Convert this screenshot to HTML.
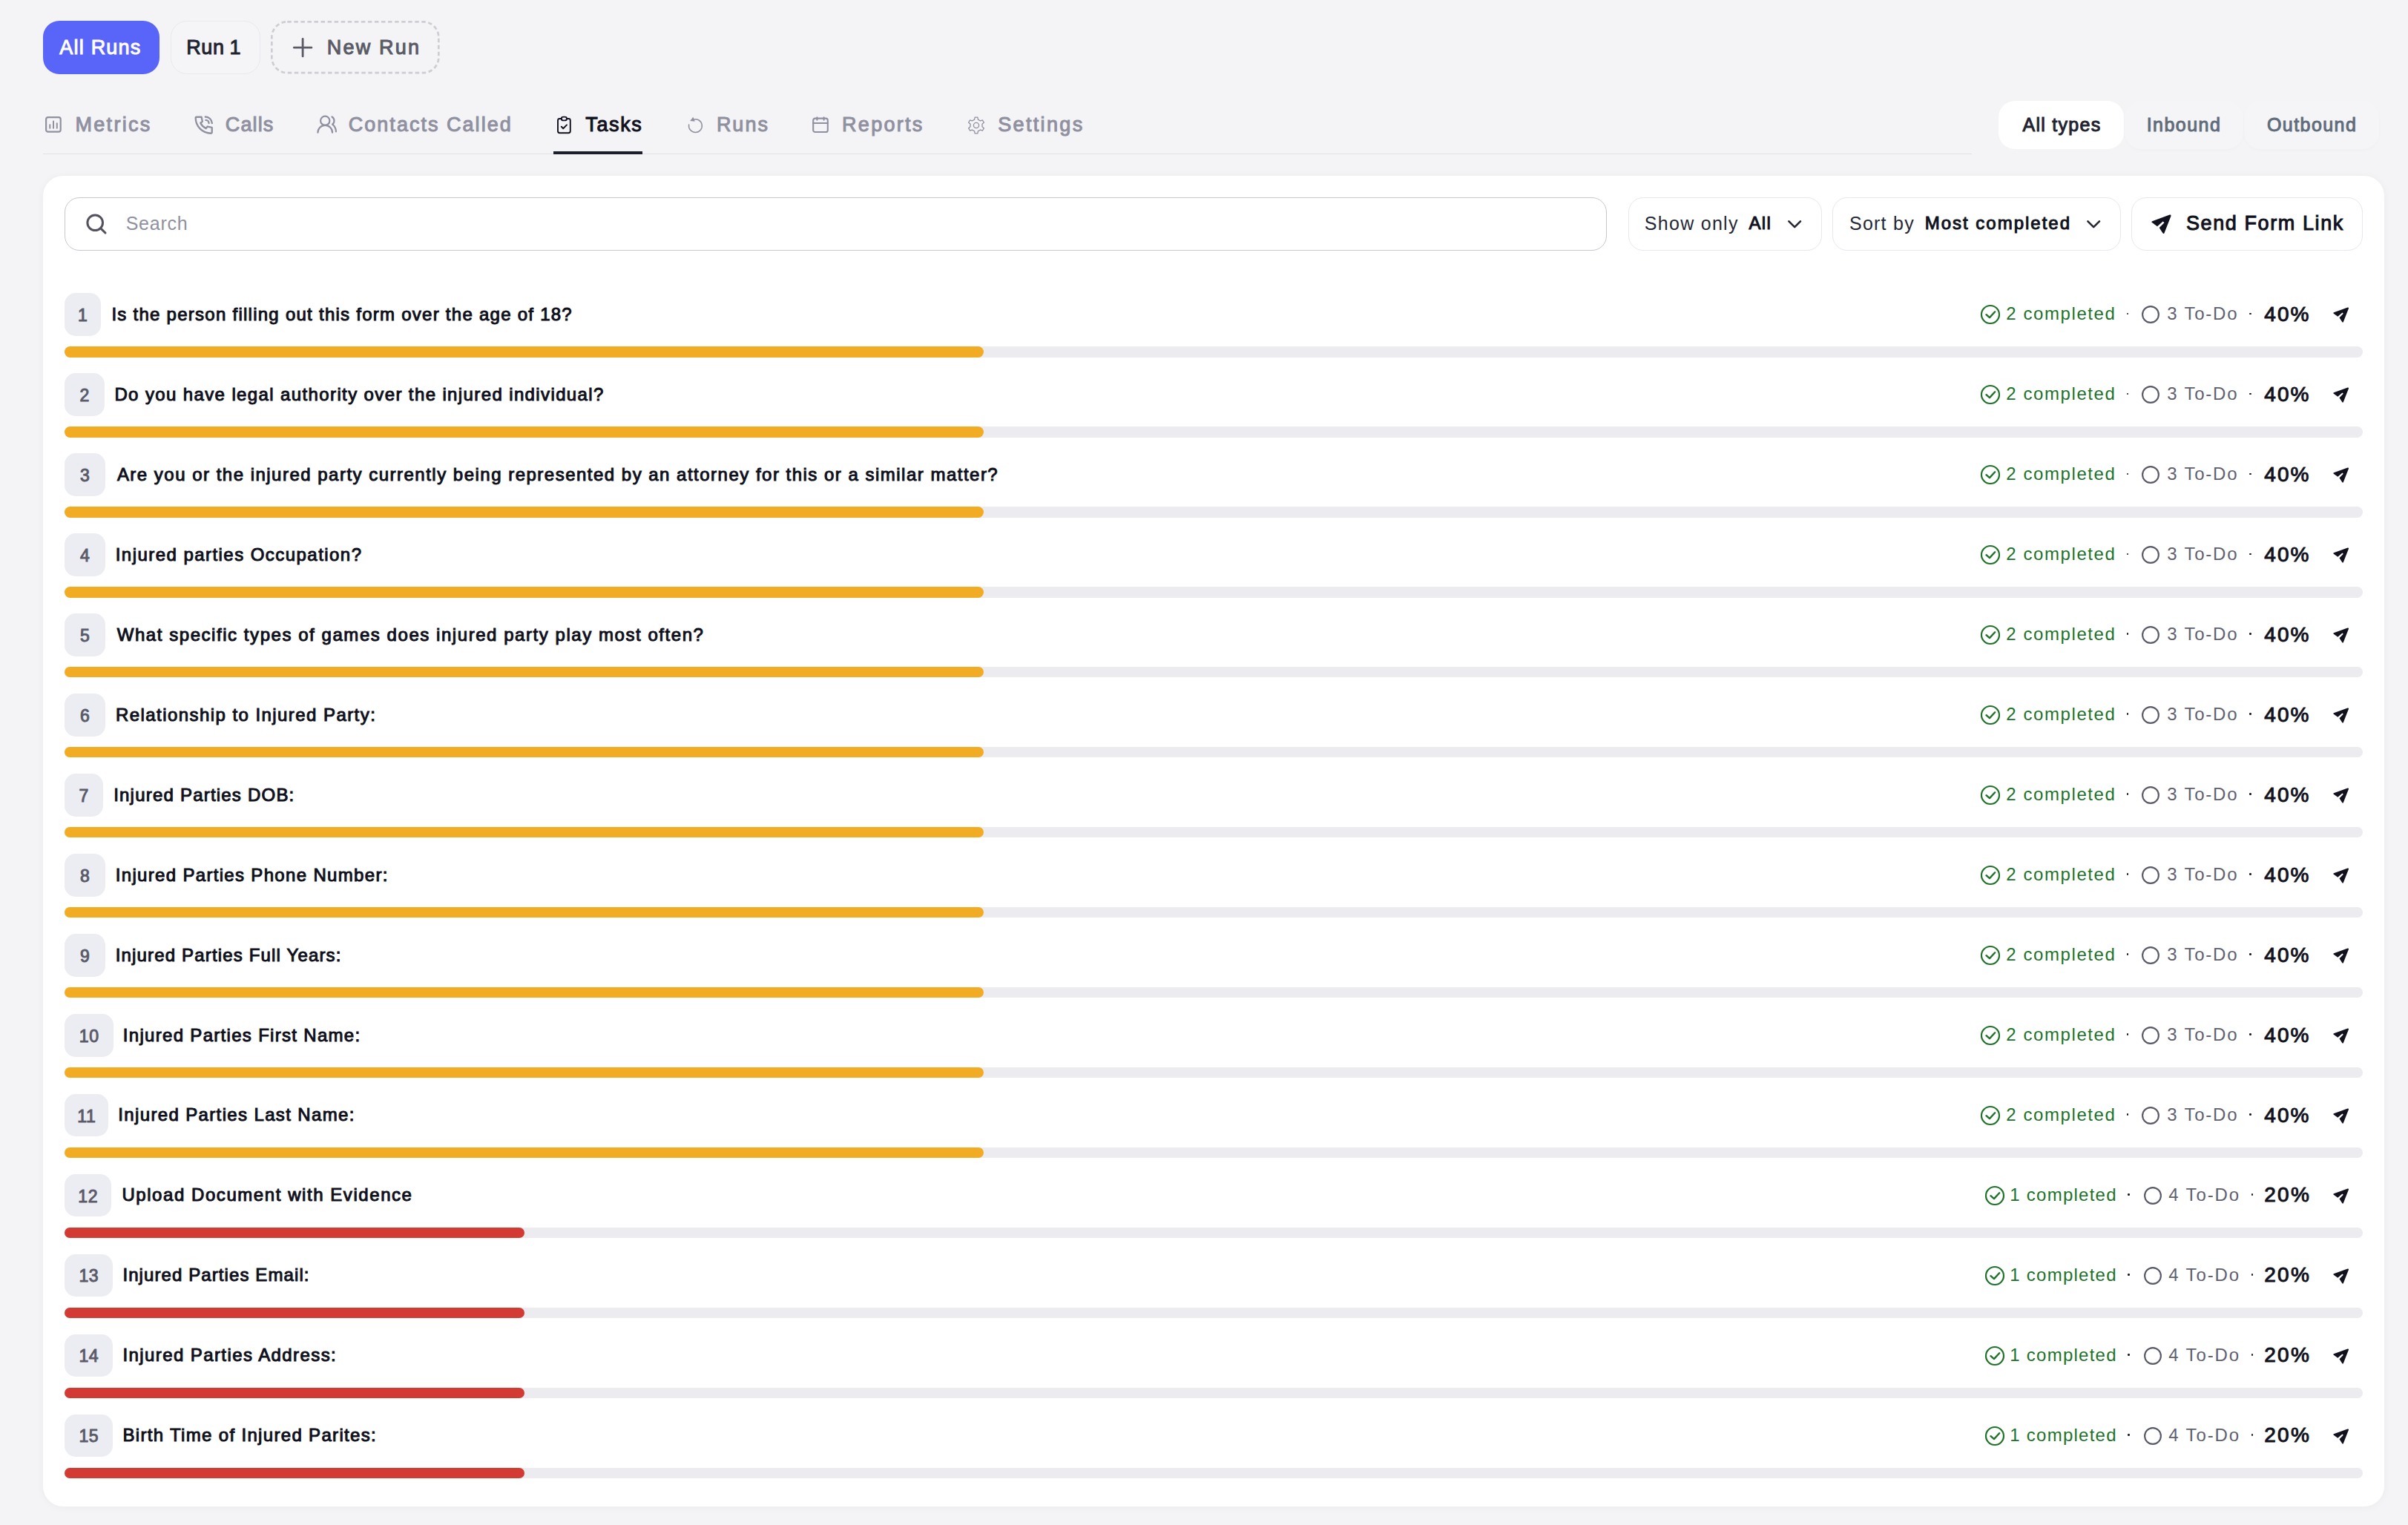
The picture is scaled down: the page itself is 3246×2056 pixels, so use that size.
<!DOCTYPE html>
<html lang="en"><head><meta charset="utf-8"><title>Tasks</title>
<style>
html,body{margin:0;padding:0;}
body{width:3246px;height:2056px;background:#f4f4f7;position:relative;overflow:hidden;font-family:"Liberation Sans", sans-serif;}
.t{position:absolute;white-space:pre;line-height:1;font-family:"Liberation Sans", sans-serif;}
.b{position:absolute;display:block;}
</style></head><body>
<div class="b" style="left:58px;top:28px;width:157px;height:71.5px;background:#5964f9;border-radius:22px;"></div>
<div class="t" style="left:80.34px;top:51.24px;font-size:27px;font-weight:400;color:#ffffff;letter-spacing:1.206px;-webkit-text-stroke:1.0px #ffffff;">All Runs</div>
<div class="b" style="left:229.5px;top:28px;width:121px;height:71.5px;border:1.5px solid #e9e9ee;border-radius:22px;box-sizing:border-box;background:#f5f5f8;"></div>
<div class="t" style="left:251.28px;top:51.24px;font-size:27px;font-weight:400;color:#1f2430;letter-spacing:0.577px;-webkit-text-stroke:1.0px #1f2430;word-spacing:-1px;">Run 1</div>
<svg class="b" style="left:365.00px;top:28.00px;" width="228" height="72" viewBox="0 0 228 72" fill="none"><rect x="1.3" y="1.3" width="225" height="68.9" rx="21" stroke="#cdced3" stroke-width="2.7" stroke-dasharray="5.5 3.55"/></svg>
<svg class="b" style="left:395.00px;top:51.00px;" width="26.5" height="26.5" viewBox="0 0 26.5 26.5" fill="none"><path d="M13.1 1.5V24.9M1.3 13.2H24.9" stroke="#5a5b66" stroke-width="2.8" stroke-linecap="round"/></svg>
<div class="t" style="left:440.77px;top:51.24px;font-size:27px;font-weight:400;color:#5a5b66;letter-spacing:2.184px;-webkit-text-stroke:1.0px #5a5b66;">New Run</div>
<div class="b" style="left:58px;top:207px;width:2600px;height:1px;background:#e0e0e6;"></div>
<svg class="b" style="left:60.40px;top:156.40px;" width="24" height="24" viewBox="0 0 24 24" fill="none"><rect x="2.1" y="2.1" width="19.6" height="19.6" rx="2.6" stroke="#8f90a0" stroke-width="2.2"/><path d="M7.3 12.2V16.8M12 7.6V16.8M16.8 10.2V16.8" stroke="#8f90a0" stroke-width="2" stroke-linecap="round"/></svg>
<div class="t" style="left:101.44px;top:155.34px;font-size:27px;font-weight:400;color:#8f90a0;letter-spacing:2.322px;-webkit-text-stroke:1.0px #8f90a0;">Metrics</div>
<svg class="b" style="left:258.50px;top:152.60px;" width="31.44" height="31.44" viewBox="0 0 24 24" fill="none"><g stroke="#8f90a0" stroke-width="1.8" stroke-linecap="round" stroke-linejoin="round"><path d="M4.6 3.6H9.6L10.6 8.3L8.6 9.7A11.9 11.9 0 0 0 14.3 15.4L15.7 13.4L20.4 14.4V19.4A1 1 0 0 1 19.4 20.4A15.8 15.8 0 0 1 3.6 4.6A1 1 0 0 1 4.6 3.6Z"/><path d="M14.1 6.8a3.1 3.1 0 0 1 3.1 3.1"/><path d="M13.6 3.4a7 7 0 0 1 6.9 6.6"/></g></svg>
<div class="t" style="left:303.76px;top:155.34px;font-size:27px;font-weight:400;color:#8f90a0;letter-spacing:1.138px;-webkit-text-stroke:1.0px #8f90a0;">Calls</div>
<svg class="b" style="left:425.75px;top:153.40px;" width="29.4" height="29.4" viewBox="0 0 24 24" fill="none"><g stroke="#8f90a0" stroke-width="1.8" stroke-linecap="round" stroke-linejoin="round"><path d="M18 21a8 8 0 0 0-16 0"/><circle cx="10" cy="8" r="5"/><path d="M22 20c0-3.37-2-6.5-4-8a5 5 0 0 0-.45-8.3"/></g></svg>
<div class="t" style="left:469.76px;top:155.34px;font-size:27px;font-weight:400;color:#8f90a0;letter-spacing:2.027px;-webkit-text-stroke:1.0px #8f90a0;">Contacts Called</div>
<svg class="b" style="left:745.90px;top:153.70px;" width="28.8" height="28.8" viewBox="0 0 24 24" fill="none"><g stroke="#11121d" stroke-width="1.6" stroke-linecap="round" stroke-linejoin="round"><path d="M9 5h-2a2 2 0 0 0 -2 2v12a2 2 0 0 0 2 2h10a2 2 0 0 0 2 -2v-12a2 2 0 0 0 -2 -2h-2"/><path d="M9 5a2 2 0 0 1 2 -2h2a2 2 0 0 1 2 2a2 2 0 0 1 -2 2h-2a2 2 0 0 1 -2 -2z"/><path d="M9 14l2 2l4 -4"/></g></svg>
<div class="t" style="left:789.23px;top:155.34px;font-size:27px;font-weight:400;color:#11121d;letter-spacing:1.657px;-webkit-text-stroke:1.0px #11121d;">Tasks</div>
<div class="b" style="left:746px;top:204px;width:120px;height:3.5px;background:#1c1f2b;"></div>
<svg class="b" style="left:925.00px;top:156.00px;" width="26" height="26" viewBox="0 0 26 26" fill="none"><path d="M9.07 5.35A8.9 8.9 0 1 1 3.64 12.05" stroke="#8f90a0" stroke-width="1.5" stroke-linecap="round"/><path d="M5.17 6.92L9.31 1.69L11.79 7.81Z" fill="#8f90a0"/></svg>
<div class="t" style="left:965.89px;top:155.34px;font-size:27px;font-weight:400;color:#8f90a0;letter-spacing:1.998px;-webkit-text-stroke:1.0px #8f90a0;">Runs</div>
<svg class="b" style="left:1093.80px;top:156.00px;" width="24" height="24" viewBox="0 0 24 24" fill="none"><g stroke="#8f90a0" stroke-width="2.1" stroke-linecap="round"><rect x="2.2" y="3.6" width="19.6" height="18.4" rx="2.6"/><path d="M2.2 10H21.8M7.4 2.4V5.8M16.6 2.4V5.8"/></g></svg>
<div class="t" style="left:1135.08px;top:155.34px;font-size:27px;font-weight:400;color:#8f90a0;letter-spacing:2.284px;-webkit-text-stroke:1.0px #8f90a0;">Reports</div>
<svg class="b" style="left:1302.90px;top:156.00px;" width="26" height="26" viewBox="0 0 26 26" fill="none"><path d="M10.58 5.17L11.14 2.16L14.86 2.16L15.42 5.17L18.57 6.98L21.46 5.97L23.32 9.19L21.00 11.18L21.00 14.82L23.32 16.81L21.46 20.03L18.57 19.02L15.42 20.83L14.86 23.84L11.14 23.84L10.58 20.83L7.43 19.02L4.54 20.03L2.68 16.81L5.00 14.82L5.00 11.18L2.68 9.19L4.54 5.97L7.43 6.98Z" stroke="#8f90a0" stroke-width="1.3" stroke-linejoin="round"/><circle cx="13" cy="13" r="3.6" stroke="#8f90a0" stroke-width="1.3"/></svg>
<div class="t" style="left:1345.17px;top:155.34px;font-size:27px;font-weight:400;color:#8f90a0;letter-spacing:2.358px;-webkit-text-stroke:1.0px #8f90a0;">Settings</div>
<div class="b" style="left:2694px;top:136px;width:169px;height:64.5px;background:#fff;border-radius:22px;"></div>
<div class="t" style="left:2726.57px;top:156.34px;font-size:25px;font-weight:400;color:#1f2430;letter-spacing:1.266px;-webkit-text-stroke:1.0px #1f2430;">All types</div>
<div class="b" style="left:2864px;top:136px;width:160px;height:64.5px;border-radius:22px;background:#f5f5f8;box-shadow:0 2px 5px rgba(20,20,40,0.02);"></div>
<div class="t" style="left:2893.70px;top:156.34px;font-size:25px;font-weight:400;color:#5f6c7b;letter-spacing:1.468px;-webkit-text-stroke:1.0px #5f6c7b;">Inbound</div>
<div class="b" style="left:3025px;top:136px;width:182px;height:64.5px;border-radius:22px;background:#f5f5f8;box-shadow:0 2px 5px rgba(20,20,40,0.02);"></div>
<div class="t" style="left:3055.94px;top:156.34px;font-size:25px;font-weight:400;color:#5f6c7b;letter-spacing:1.443px;-webkit-text-stroke:1.0px #5f6c7b;">Outbound</div>
<div class="b" style="left:58px;top:237px;width:3156px;height:1793.5px;background:#fff;border-radius:27px;box-shadow:0 1px 12px rgba(40,40,55,0.042);"></div>
<div class="b" style="left:87px;top:266px;width:2078.5px;height:72px;border:1.3px solid #c6c7d0;border-radius:20px;box-sizing:border-box;"></div>
<svg class="b" style="left:114.00px;top:286.00px;" width="32" height="32" viewBox="0 0 32 32" fill="none"><circle cx="14.2" cy="14.3" r="10.3" stroke="#52535f" stroke-width="3"/><path d="M21.8 21.9L28 28" stroke="#52535f" stroke-width="3" stroke-linecap="round"/></svg>
<div class="t" style="left:169.63px;top:288.84px;font-size:25px;font-weight:400;color:#8f90a0;letter-spacing:0.772px;">Search</div>
<div class="b" style="left:2195px;top:266px;width:261px;height:72px;border:1.3px solid #e7e7ed;border-radius:20px;box-sizing:border-box;"></div>
<div class="t" style="left:2216.86px;top:288.84px;font-size:25px;font-weight:400;color:#252735;letter-spacing:1.272px;">Show only</div>
<div class="t" style="left:2357.61px;top:289.28px;font-size:24px;font-weight:400;color:#11121d;letter-spacing:1.227px;-webkit-text-stroke:1.0px #11121d;">All</div>
<svg class="b" style="left:2408.00px;top:295.00px;" width="22" height="16" viewBox="0 0 22 16" fill="none"><path d="M3.4 3.4L11.2 11.2L19 3.4" stroke="#252735" stroke-width="2.6" stroke-linecap="round" stroke-linejoin="round"/></svg>
<div class="b" style="left:2470px;top:266px;width:389px;height:72px;border:1.3px solid #e7e7ed;border-radius:20px;box-sizing:border-box;"></div>
<div class="t" style="left:2492.97px;top:288.84px;font-size:25px;font-weight:400;color:#252735;letter-spacing:1.246px;">Sort by</div>
<div class="t" style="left:2594.72px;top:289.28px;font-size:24px;font-weight:400;color:#11121d;letter-spacing:1.991px;-webkit-text-stroke:1.0px #11121d;">Most completed</div>
<svg class="b" style="left:2811.00px;top:295.00px;" width="22" height="16" viewBox="0 0 22 16" fill="none"><path d="M3.4 3.4L11.2 11.2L19 3.4" stroke="#252735" stroke-width="2.6" stroke-linecap="round" stroke-linejoin="round"/></svg>
<div class="b" style="left:2873px;top:266px;width:312px;height:72px;border:1.3px solid #e7e7ed;border-radius:20px;box-sizing:border-box;"></div>
<svg class="b" style="left:2900.00px;top:289.40px;" width="27" height="27" viewBox="0 0 27 27" fill="none"><path d="M24.8 0.6L1.2 9.2Q-0.4 10.1 1 11.1L8 16.2L15.7 9.4L17.5 11.2L10.7 17.9L15.4 25.3Q16.6 26.9 17.5 25.2L26.4 2.5Q26.9 0.1 24.8 0.6Z" fill="#11121d"/></svg>
<div class="t" style="left:2947.03px;top:287.74px;font-size:27px;font-weight:400;color:#11121d;letter-spacing:1.590px;-webkit-text-stroke:1.0px #11121d;">Send Form Link</div>
<div class="b" style="left:87px;top:395.20px;width:49px;height:57.6px;background:#ecedf2;border-radius:15px;"></div>
<div class="t" style="left:87px;width:49px;text-align:center;top:413.83px;font-size:23px;font-weight:400;-webkit-text-stroke:1px #5a5b6a;letter-spacing:0.6px;text-indent:0.6px;color:#5a5b6a;">1</div>
<div class="t" style="left:150.41px;top:411.78px;font-size:24px;font-weight:400;color:#0f101c;letter-spacing:1.259px;-webkit-text-stroke:1.0px #0f101c;">Is the person filling out this form over the age of 18?</div>
<div class="b" style="left:87px;top:467.20px;width:3098px;height:14.4px;background:#ebebf0;border-radius:8px;"></div>
<div class="b" style="left:87px;top:467.20px;width:1239.2px;height:14.4px;background:#f2ac24;border-radius:8px;"></div>
<svg class="b" style="left:2669.20px;top:410.30px;" width="28" height="28" viewBox="0 0 28 28" fill="none"><circle cx="14" cy="14" r="12" stroke="#20722a" stroke-width="2.2"/><path d="M8.5 14.2L13 18.1L20.2 10.3" stroke="#20722a" stroke-width="2.4" stroke-linecap="round" stroke-linejoin="round"/></svg>
<div class="t" style="left:2704.36px;top:411.38px;font-size:24px;font-weight:400;color:#20722a;letter-spacing:1.569px;">2 completed</div>
<div class="b" style="left:2866.55px;top:421.6px;width:2.7px;height:2.7px;background:#1a1b26;border-radius:50%;"></div>
<svg class="b" style="left:2886.30px;top:411.20px;" width="26" height="26" viewBox="0 0 26 26" fill="none"><circle cx="13" cy="13" r="10.9" stroke="#595a68" stroke-width="2.1"/></svg>
<div class="t" style="left:2921.22px;top:411.48px;font-size:24px;font-weight:400;color:#5f6070;letter-spacing:1.789px;">3 To-Do</div>
<div class="b" style="left:3032.25px;top:421.6px;width:2.7px;height:2.7px;background:#1a1b26;border-radius:50%;"></div>
<div class="t" style="left:3052.17px;top:409.80px;font-size:28px;font-weight:400;color:#11121d;letter-spacing:2.161px;-webkit-text-stroke:1.0px #11121d;">40%</div>
<svg class="b" style="left:3145.20px;top:414.30px;" width="21.4" height="21.4" viewBox="0 0 27 27" fill="none"><path d="M24.8 0.6L1.2 9.2Q-0.4 10.1 1 11.1L8 16.2L15.7 9.4L17.5 11.2L10.7 17.9L15.4 25.3Q16.6 26.9 17.5 25.2L26.4 2.5Q26.9 0.1 24.8 0.6Z" fill="#11121d"/></svg>
<div class="b" style="left:87px;top:503.17px;width:54px;height:57.6px;background:#ecedf2;border-radius:15px;"></div>
<div class="t" style="left:87px;width:54px;text-align:center;top:521.80px;font-size:23px;font-weight:400;-webkit-text-stroke:1px #5a5b6a;letter-spacing:0.6px;text-indent:0.6px;color:#5a5b6a;">2</div>
<div class="t" style="left:154.41px;top:519.75px;font-size:24px;font-weight:400;color:#0f101c;letter-spacing:1.381px;-webkit-text-stroke:1.0px #0f101c;">Do you have legal authority over the injured individual?</div>
<div class="b" style="left:87px;top:575.17px;width:3098px;height:14.4px;background:#ebebf0;border-radius:8px;"></div>
<div class="b" style="left:87px;top:575.17px;width:1239.2px;height:14.4px;background:#f2ac24;border-radius:8px;"></div>
<svg class="b" style="left:2669.20px;top:518.27px;" width="28" height="28" viewBox="0 0 28 28" fill="none"><circle cx="14" cy="14" r="12" stroke="#20722a" stroke-width="2.2"/><path d="M8.5 14.2L13 18.1L20.2 10.3" stroke="#20722a" stroke-width="2.4" stroke-linecap="round" stroke-linejoin="round"/></svg>
<div class="t" style="left:2704.36px;top:519.35px;font-size:24px;font-weight:400;color:#20722a;letter-spacing:1.569px;">2 completed</div>
<div class="b" style="left:2866.55px;top:529.57px;width:2.7px;height:2.7px;background:#1a1b26;border-radius:50%;"></div>
<svg class="b" style="left:2886.30px;top:519.17px;" width="26" height="26" viewBox="0 0 26 26" fill="none"><circle cx="13" cy="13" r="10.9" stroke="#595a68" stroke-width="2.1"/></svg>
<div class="t" style="left:2921.22px;top:519.45px;font-size:24px;font-weight:400;color:#5f6070;letter-spacing:1.789px;">3 To-Do</div>
<div class="b" style="left:3032.25px;top:529.57px;width:2.7px;height:2.7px;background:#1a1b26;border-radius:50%;"></div>
<div class="t" style="left:3052.17px;top:517.77px;font-size:28px;font-weight:400;color:#11121d;letter-spacing:2.161px;-webkit-text-stroke:1.0px #11121d;">40%</div>
<svg class="b" style="left:3145.20px;top:522.27px;" width="21.4" height="21.4" viewBox="0 0 27 27" fill="none"><path d="M24.8 0.6L1.2 9.2Q-0.4 10.1 1 11.1L8 16.2L15.7 9.4L17.5 11.2L10.7 17.9L15.4 25.3Q16.6 26.9 17.5 25.2L26.4 2.5Q26.9 0.1 24.8 0.6Z" fill="#11121d"/></svg>
<div class="b" style="left:87px;top:611.14px;width:54.7px;height:57.6px;background:#ecedf2;border-radius:15px;"></div>
<div class="t" style="left:87px;width:54.7px;text-align:center;top:629.77px;font-size:23px;font-weight:400;-webkit-text-stroke:1px #5a5b6a;letter-spacing:0.6px;text-indent:0.6px;color:#5a5b6a;">3</div>
<div class="t" style="left:157.89px;top:627.72px;font-size:24px;font-weight:400;color:#0f101c;letter-spacing:1.490px;-webkit-text-stroke:1.0px #0f101c;">Are you or the injured party currently being represented by an attorney for this or a similar matter?</div>
<div class="b" style="left:87px;top:683.14px;width:3098px;height:14.4px;background:#ebebf0;border-radius:8px;"></div>
<div class="b" style="left:87px;top:683.14px;width:1239.2px;height:14.4px;background:#f2ac24;border-radius:8px;"></div>
<svg class="b" style="left:2669.20px;top:626.24px;" width="28" height="28" viewBox="0 0 28 28" fill="none"><circle cx="14" cy="14" r="12" stroke="#20722a" stroke-width="2.2"/><path d="M8.5 14.2L13 18.1L20.2 10.3" stroke="#20722a" stroke-width="2.4" stroke-linecap="round" stroke-linejoin="round"/></svg>
<div class="t" style="left:2704.36px;top:627.32px;font-size:24px;font-weight:400;color:#20722a;letter-spacing:1.569px;">2 completed</div>
<div class="b" style="left:2866.55px;top:637.54px;width:2.7px;height:2.7px;background:#1a1b26;border-radius:50%;"></div>
<svg class="b" style="left:2886.30px;top:627.14px;" width="26" height="26" viewBox="0 0 26 26" fill="none"><circle cx="13" cy="13" r="10.9" stroke="#595a68" stroke-width="2.1"/></svg>
<div class="t" style="left:2921.22px;top:627.42px;font-size:24px;font-weight:400;color:#5f6070;letter-spacing:1.789px;">3 To-Do</div>
<div class="b" style="left:3032.25px;top:637.54px;width:2.7px;height:2.7px;background:#1a1b26;border-radius:50%;"></div>
<div class="t" style="left:3052.17px;top:625.74px;font-size:28px;font-weight:400;color:#11121d;letter-spacing:2.161px;-webkit-text-stroke:1.0px #11121d;">40%</div>
<svg class="b" style="left:3145.20px;top:630.24px;" width="21.4" height="21.4" viewBox="0 0 27 27" fill="none"><path d="M24.8 0.6L1.2 9.2Q-0.4 10.1 1 11.1L8 16.2L15.7 9.4L17.5 11.2L10.7 17.9L15.4 25.3Q16.6 26.9 17.5 25.2L26.4 2.5Q26.9 0.1 24.8 0.6Z" fill="#11121d"/></svg>
<div class="b" style="left:87px;top:719.11px;width:54.7px;height:57.6px;background:#ecedf2;border-radius:15px;"></div>
<div class="t" style="left:87px;width:54.7px;text-align:center;top:737.74px;font-size:23px;font-weight:400;-webkit-text-stroke:1px #5a5b6a;letter-spacing:0.6px;text-indent:0.6px;color:#5a5b6a;">4</div>
<div class="t" style="left:155.73px;top:735.69px;font-size:24px;font-weight:400;color:#0f101c;letter-spacing:1.452px;-webkit-text-stroke:1.0px #0f101c;">Injured parties Occupation?</div>
<div class="b" style="left:87px;top:791.11px;width:3098px;height:14.4px;background:#ebebf0;border-radius:8px;"></div>
<div class="b" style="left:87px;top:791.11px;width:1239.2px;height:14.4px;background:#f2ac24;border-radius:8px;"></div>
<svg class="b" style="left:2669.20px;top:734.21px;" width="28" height="28" viewBox="0 0 28 28" fill="none"><circle cx="14" cy="14" r="12" stroke="#20722a" stroke-width="2.2"/><path d="M8.5 14.2L13 18.1L20.2 10.3" stroke="#20722a" stroke-width="2.4" stroke-linecap="round" stroke-linejoin="round"/></svg>
<div class="t" style="left:2704.36px;top:735.29px;font-size:24px;font-weight:400;color:#20722a;letter-spacing:1.569px;">2 completed</div>
<div class="b" style="left:2866.55px;top:745.51px;width:2.7px;height:2.7px;background:#1a1b26;border-radius:50%;"></div>
<svg class="b" style="left:2886.30px;top:735.11px;" width="26" height="26" viewBox="0 0 26 26" fill="none"><circle cx="13" cy="13" r="10.9" stroke="#595a68" stroke-width="2.1"/></svg>
<div class="t" style="left:2921.22px;top:735.39px;font-size:24px;font-weight:400;color:#5f6070;letter-spacing:1.789px;">3 To-Do</div>
<div class="b" style="left:3032.25px;top:745.51px;width:2.7px;height:2.7px;background:#1a1b26;border-radius:50%;"></div>
<div class="t" style="left:3052.17px;top:733.71px;font-size:28px;font-weight:400;color:#11121d;letter-spacing:2.161px;-webkit-text-stroke:1.0px #11121d;">40%</div>
<svg class="b" style="left:3145.20px;top:738.21px;" width="21.4" height="21.4" viewBox="0 0 27 27" fill="none"><path d="M24.8 0.6L1.2 9.2Q-0.4 10.1 1 11.1L8 16.2L15.7 9.4L17.5 11.2L10.7 17.9L15.4 25.3Q16.6 26.9 17.5 25.2L26.4 2.5Q26.9 0.1 24.8 0.6Z" fill="#11121d"/></svg>
<div class="b" style="left:87px;top:827.08px;width:54.7px;height:57.6px;background:#ecedf2;border-radius:15px;"></div>
<div class="t" style="left:87px;width:54.7px;text-align:center;top:845.71px;font-size:23px;font-weight:400;-webkit-text-stroke:1px #5a5b6a;letter-spacing:0.6px;text-indent:0.6px;color:#5a5b6a;">5</div>
<div class="t" style="left:157.76px;top:843.66px;font-size:24px;font-weight:400;color:#0f101c;letter-spacing:1.553px;-webkit-text-stroke:1.0px #0f101c;">What specific types of games does injured party play most often?</div>
<div class="b" style="left:87px;top:899.08px;width:3098px;height:14.4px;background:#ebebf0;border-radius:8px;"></div>
<div class="b" style="left:87px;top:899.08px;width:1239.2px;height:14.4px;background:#f2ac24;border-radius:8px;"></div>
<svg class="b" style="left:2669.20px;top:842.18px;" width="28" height="28" viewBox="0 0 28 28" fill="none"><circle cx="14" cy="14" r="12" stroke="#20722a" stroke-width="2.2"/><path d="M8.5 14.2L13 18.1L20.2 10.3" stroke="#20722a" stroke-width="2.4" stroke-linecap="round" stroke-linejoin="round"/></svg>
<div class="t" style="left:2704.36px;top:843.26px;font-size:24px;font-weight:400;color:#20722a;letter-spacing:1.569px;">2 completed</div>
<div class="b" style="left:2866.55px;top:853.48px;width:2.7px;height:2.7px;background:#1a1b26;border-radius:50%;"></div>
<svg class="b" style="left:2886.30px;top:843.08px;" width="26" height="26" viewBox="0 0 26 26" fill="none"><circle cx="13" cy="13" r="10.9" stroke="#595a68" stroke-width="2.1"/></svg>
<div class="t" style="left:2921.22px;top:843.36px;font-size:24px;font-weight:400;color:#5f6070;letter-spacing:1.789px;">3 To-Do</div>
<div class="b" style="left:3032.25px;top:853.48px;width:2.7px;height:2.7px;background:#1a1b26;border-radius:50%;"></div>
<div class="t" style="left:3052.17px;top:841.68px;font-size:28px;font-weight:400;color:#11121d;letter-spacing:2.161px;-webkit-text-stroke:1.0px #11121d;">40%</div>
<svg class="b" style="left:3145.20px;top:846.18px;" width="21.4" height="21.4" viewBox="0 0 27 27" fill="none"><path d="M24.8 0.6L1.2 9.2Q-0.4 10.1 1 11.1L8 16.2L15.7 9.4L17.5 11.2L10.7 17.9L15.4 25.3Q16.6 26.9 17.5 25.2L26.4 2.5Q26.9 0.1 24.8 0.6Z" fill="#11121d"/></svg>
<div class="b" style="left:87px;top:935.05px;width:54.7px;height:57.6px;background:#ecedf2;border-radius:15px;"></div>
<div class="t" style="left:87px;width:54.7px;text-align:center;top:953.68px;font-size:23px;font-weight:400;-webkit-text-stroke:1px #5a5b6a;letter-spacing:0.6px;text-indent:0.6px;color:#5a5b6a;">6</div>
<div class="t" style="left:155.97px;top:951.63px;font-size:24px;font-weight:400;color:#0f101c;letter-spacing:1.437px;-webkit-text-stroke:1.0px #0f101c;">Relationship to Injured Party:</div>
<div class="b" style="left:87px;top:1007.05px;width:3098px;height:14.4px;background:#ebebf0;border-radius:8px;"></div>
<div class="b" style="left:87px;top:1007.05px;width:1239.2px;height:14.4px;background:#f2ac24;border-radius:8px;"></div>
<svg class="b" style="left:2669.20px;top:950.15px;" width="28" height="28" viewBox="0 0 28 28" fill="none"><circle cx="14" cy="14" r="12" stroke="#20722a" stroke-width="2.2"/><path d="M8.5 14.2L13 18.1L20.2 10.3" stroke="#20722a" stroke-width="2.4" stroke-linecap="round" stroke-linejoin="round"/></svg>
<div class="t" style="left:2704.36px;top:951.23px;font-size:24px;font-weight:400;color:#20722a;letter-spacing:1.569px;">2 completed</div>
<div class="b" style="left:2866.55px;top:961.45px;width:2.7px;height:2.7px;background:#1a1b26;border-radius:50%;"></div>
<svg class="b" style="left:2886.30px;top:951.05px;" width="26" height="26" viewBox="0 0 26 26" fill="none"><circle cx="13" cy="13" r="10.9" stroke="#595a68" stroke-width="2.1"/></svg>
<div class="t" style="left:2921.22px;top:951.33px;font-size:24px;font-weight:400;color:#5f6070;letter-spacing:1.789px;">3 To-Do</div>
<div class="b" style="left:3032.25px;top:961.45px;width:2.7px;height:2.7px;background:#1a1b26;border-radius:50%;"></div>
<div class="t" style="left:3052.17px;top:949.65px;font-size:28px;font-weight:400;color:#11121d;letter-spacing:2.161px;-webkit-text-stroke:1.0px #11121d;">40%</div>
<svg class="b" style="left:3145.20px;top:954.15px;" width="21.4" height="21.4" viewBox="0 0 27 27" fill="none"><path d="M24.8 0.6L1.2 9.2Q-0.4 10.1 1 11.1L8 16.2L15.7 9.4L17.5 11.2L10.7 17.9L15.4 25.3Q16.6 26.9 17.5 25.2L26.4 2.5Q26.9 0.1 24.8 0.6Z" fill="#11121d"/></svg>
<div class="b" style="left:87px;top:1043.02px;width:51.7px;height:57.6px;background:#ecedf2;border-radius:15px;"></div>
<div class="t" style="left:87px;width:51.7px;text-align:center;top:1061.65px;font-size:23px;font-weight:400;-webkit-text-stroke:1px #5a5b6a;letter-spacing:0.6px;text-indent:0.6px;color:#5a5b6a;">7</div>
<div class="t" style="left:153.18px;top:1059.60px;font-size:24px;font-weight:400;color:#0f101c;letter-spacing:1.211px;-webkit-text-stroke:1.0px #0f101c;">Injured Parties DOB:</div>
<div class="b" style="left:87px;top:1115.02px;width:3098px;height:14.4px;background:#ebebf0;border-radius:8px;"></div>
<div class="b" style="left:87px;top:1115.02px;width:1239.2px;height:14.4px;background:#f2ac24;border-radius:8px;"></div>
<svg class="b" style="left:2669.20px;top:1058.12px;" width="28" height="28" viewBox="0 0 28 28" fill="none"><circle cx="14" cy="14" r="12" stroke="#20722a" stroke-width="2.2"/><path d="M8.5 14.2L13 18.1L20.2 10.3" stroke="#20722a" stroke-width="2.4" stroke-linecap="round" stroke-linejoin="round"/></svg>
<div class="t" style="left:2704.36px;top:1059.20px;font-size:24px;font-weight:400;color:#20722a;letter-spacing:1.569px;">2 completed</div>
<div class="b" style="left:2866.55px;top:1069.42px;width:2.7px;height:2.7px;background:#1a1b26;border-radius:50%;"></div>
<svg class="b" style="left:2886.30px;top:1059.02px;" width="26" height="26" viewBox="0 0 26 26" fill="none"><circle cx="13" cy="13" r="10.9" stroke="#595a68" stroke-width="2.1"/></svg>
<div class="t" style="left:2921.22px;top:1059.30px;font-size:24px;font-weight:400;color:#5f6070;letter-spacing:1.789px;">3 To-Do</div>
<div class="b" style="left:3032.25px;top:1069.42px;width:2.7px;height:2.7px;background:#1a1b26;border-radius:50%;"></div>
<div class="t" style="left:3052.17px;top:1057.62px;font-size:28px;font-weight:400;color:#11121d;letter-spacing:2.161px;-webkit-text-stroke:1.0px #11121d;">40%</div>
<svg class="b" style="left:3145.20px;top:1062.12px;" width="21.4" height="21.4" viewBox="0 0 27 27" fill="none"><path d="M24.8 0.6L1.2 9.2Q-0.4 10.1 1 11.1L8 16.2L15.7 9.4L17.5 11.2L10.7 17.9L15.4 25.3Q16.6 26.9 17.5 25.2L26.4 2.5Q26.9 0.1 24.8 0.6Z" fill="#11121d"/></svg>
<div class="b" style="left:87px;top:1150.99px;width:54.7px;height:57.6px;background:#ecedf2;border-radius:15px;"></div>
<div class="t" style="left:87px;width:54.7px;text-align:center;top:1169.62px;font-size:23px;font-weight:400;-webkit-text-stroke:1px #5a5b6a;letter-spacing:0.6px;text-indent:0.6px;color:#5a5b6a;">8</div>
<div class="t" style="left:155.73px;top:1167.57px;font-size:24px;font-weight:400;color:#0f101c;letter-spacing:1.327px;-webkit-text-stroke:1.0px #0f101c;">Injured Parties Phone Number:</div>
<div class="b" style="left:87px;top:1222.99px;width:3098px;height:14.4px;background:#ebebf0;border-radius:8px;"></div>
<div class="b" style="left:87px;top:1222.99px;width:1239.2px;height:14.4px;background:#f2ac24;border-radius:8px;"></div>
<svg class="b" style="left:2669.20px;top:1166.09px;" width="28" height="28" viewBox="0 0 28 28" fill="none"><circle cx="14" cy="14" r="12" stroke="#20722a" stroke-width="2.2"/><path d="M8.5 14.2L13 18.1L20.2 10.3" stroke="#20722a" stroke-width="2.4" stroke-linecap="round" stroke-linejoin="round"/></svg>
<div class="t" style="left:2704.36px;top:1167.17px;font-size:24px;font-weight:400;color:#20722a;letter-spacing:1.569px;">2 completed</div>
<div class="b" style="left:2866.55px;top:1177.39px;width:2.7px;height:2.7px;background:#1a1b26;border-radius:50%;"></div>
<svg class="b" style="left:2886.30px;top:1166.99px;" width="26" height="26" viewBox="0 0 26 26" fill="none"><circle cx="13" cy="13" r="10.9" stroke="#595a68" stroke-width="2.1"/></svg>
<div class="t" style="left:2921.22px;top:1167.27px;font-size:24px;font-weight:400;color:#5f6070;letter-spacing:1.789px;">3 To-Do</div>
<div class="b" style="left:3032.25px;top:1177.39px;width:2.7px;height:2.7px;background:#1a1b26;border-radius:50%;"></div>
<div class="t" style="left:3052.17px;top:1165.59px;font-size:28px;font-weight:400;color:#11121d;letter-spacing:2.161px;-webkit-text-stroke:1.0px #11121d;">40%</div>
<svg class="b" style="left:3145.20px;top:1170.09px;" width="21.4" height="21.4" viewBox="0 0 27 27" fill="none"><path d="M24.8 0.6L1.2 9.2Q-0.4 10.1 1 11.1L8 16.2L15.7 9.4L17.5 11.2L10.7 17.9L15.4 25.3Q16.6 26.9 17.5 25.2L26.4 2.5Q26.9 0.1 24.8 0.6Z" fill="#11121d"/></svg>
<div class="b" style="left:87px;top:1258.96px;width:54.7px;height:57.6px;background:#ecedf2;border-radius:15px;"></div>
<div class="t" style="left:87px;width:54.7px;text-align:center;top:1277.59px;font-size:23px;font-weight:400;-webkit-text-stroke:1px #5a5b6a;letter-spacing:0.6px;text-indent:0.6px;color:#5a5b6a;">9</div>
<div class="t" style="left:155.73px;top:1275.54px;font-size:24px;font-weight:400;color:#0f101c;letter-spacing:1.161px;-webkit-text-stroke:1.0px #0f101c;">Injured Parties Full Years:</div>
<div class="b" style="left:87px;top:1330.96px;width:3098px;height:14.4px;background:#ebebf0;border-radius:8px;"></div>
<div class="b" style="left:87px;top:1330.96px;width:1239.2px;height:14.4px;background:#f2ac24;border-radius:8px;"></div>
<svg class="b" style="left:2669.20px;top:1274.06px;" width="28" height="28" viewBox="0 0 28 28" fill="none"><circle cx="14" cy="14" r="12" stroke="#20722a" stroke-width="2.2"/><path d="M8.5 14.2L13 18.1L20.2 10.3" stroke="#20722a" stroke-width="2.4" stroke-linecap="round" stroke-linejoin="round"/></svg>
<div class="t" style="left:2704.36px;top:1275.14px;font-size:24px;font-weight:400;color:#20722a;letter-spacing:1.569px;">2 completed</div>
<div class="b" style="left:2866.55px;top:1285.36px;width:2.7px;height:2.7px;background:#1a1b26;border-radius:50%;"></div>
<svg class="b" style="left:2886.30px;top:1274.96px;" width="26" height="26" viewBox="0 0 26 26" fill="none"><circle cx="13" cy="13" r="10.9" stroke="#595a68" stroke-width="2.1"/></svg>
<div class="t" style="left:2921.22px;top:1275.24px;font-size:24px;font-weight:400;color:#5f6070;letter-spacing:1.789px;">3 To-Do</div>
<div class="b" style="left:3032.25px;top:1285.36px;width:2.7px;height:2.7px;background:#1a1b26;border-radius:50%;"></div>
<div class="t" style="left:3052.17px;top:1273.56px;font-size:28px;font-weight:400;color:#11121d;letter-spacing:2.161px;-webkit-text-stroke:1.0px #11121d;">40%</div>
<svg class="b" style="left:3145.20px;top:1278.06px;" width="21.4" height="21.4" viewBox="0 0 27 27" fill="none"><path d="M24.8 0.6L1.2 9.2Q-0.4 10.1 1 11.1L8 16.2L15.7 9.4L17.5 11.2L10.7 17.9L15.4 25.3Q16.6 26.9 17.5 25.2L26.4 2.5Q26.9 0.1 24.8 0.6Z" fill="#11121d"/></svg>
<div class="b" style="left:87px;top:1366.93px;width:65.7px;height:57.6px;background:#ecedf2;border-radius:15px;"></div>
<div class="t" style="left:87px;width:65.7px;text-align:center;top:1385.56px;font-size:23px;font-weight:400;-webkit-text-stroke:1px #5a5b6a;letter-spacing:0.6px;text-indent:0.6px;color:#5a5b6a;">10</div>
<div class="t" style="left:165.86px;top:1383.51px;font-size:24px;font-weight:400;color:#0f101c;letter-spacing:1.304px;-webkit-text-stroke:1.0px #0f101c;">Injured Parties First Name:</div>
<div class="b" style="left:87px;top:1438.93px;width:3098px;height:14.4px;background:#ebebf0;border-radius:8px;"></div>
<div class="b" style="left:87px;top:1438.93px;width:1239.2px;height:14.4px;background:#f2ac24;border-radius:8px;"></div>
<svg class="b" style="left:2669.20px;top:1382.03px;" width="28" height="28" viewBox="0 0 28 28" fill="none"><circle cx="14" cy="14" r="12" stroke="#20722a" stroke-width="2.2"/><path d="M8.5 14.2L13 18.1L20.2 10.3" stroke="#20722a" stroke-width="2.4" stroke-linecap="round" stroke-linejoin="round"/></svg>
<div class="t" style="left:2704.36px;top:1383.11px;font-size:24px;font-weight:400;color:#20722a;letter-spacing:1.569px;">2 completed</div>
<div class="b" style="left:2866.55px;top:1393.33px;width:2.7px;height:2.7px;background:#1a1b26;border-radius:50%;"></div>
<svg class="b" style="left:2886.30px;top:1382.93px;" width="26" height="26" viewBox="0 0 26 26" fill="none"><circle cx="13" cy="13" r="10.9" stroke="#595a68" stroke-width="2.1"/></svg>
<div class="t" style="left:2921.22px;top:1383.21px;font-size:24px;font-weight:400;color:#5f6070;letter-spacing:1.789px;">3 To-Do</div>
<div class="b" style="left:3032.25px;top:1393.33px;width:2.7px;height:2.7px;background:#1a1b26;border-radius:50%;"></div>
<div class="t" style="left:3052.17px;top:1381.53px;font-size:28px;font-weight:400;color:#11121d;letter-spacing:2.161px;-webkit-text-stroke:1.0px #11121d;">40%</div>
<svg class="b" style="left:3145.20px;top:1386.03px;" width="21.4" height="21.4" viewBox="0 0 27 27" fill="none"><path d="M24.8 0.6L1.2 9.2Q-0.4 10.1 1 11.1L8 16.2L15.7 9.4L17.5 11.2L10.7 17.9L15.4 25.3Q16.6 26.9 17.5 25.2L26.4 2.5Q26.9 0.1 24.8 0.6Z" fill="#11121d"/></svg>
<div class="b" style="left:87px;top:1474.90px;width:59px;height:57.6px;background:#ecedf2;border-radius:15px;"></div>
<div class="t" style="left:87px;width:59px;text-align:center;top:1493.53px;font-size:23px;font-weight:400;-webkit-text-stroke:1px #5a5b6a;letter-spacing:0.6px;text-indent:0.6px;color:#5a5b6a;">11</div>
<div class="t" style="left:159.31px;top:1491.48px;font-size:24px;font-weight:400;color:#0f101c;letter-spacing:1.357px;-webkit-text-stroke:1.0px #0f101c;">Injured Parties Last Name:</div>
<div class="b" style="left:87px;top:1546.90px;width:3098px;height:14.4px;background:#ebebf0;border-radius:8px;"></div>
<div class="b" style="left:87px;top:1546.90px;width:1239.2px;height:14.4px;background:#f2ac24;border-radius:8px;"></div>
<svg class="b" style="left:2669.20px;top:1490.00px;" width="28" height="28" viewBox="0 0 28 28" fill="none"><circle cx="14" cy="14" r="12" stroke="#20722a" stroke-width="2.2"/><path d="M8.5 14.2L13 18.1L20.2 10.3" stroke="#20722a" stroke-width="2.4" stroke-linecap="round" stroke-linejoin="round"/></svg>
<div class="t" style="left:2704.36px;top:1491.08px;font-size:24px;font-weight:400;color:#20722a;letter-spacing:1.569px;">2 completed</div>
<div class="b" style="left:2866.55px;top:1501.3px;width:2.7px;height:2.7px;background:#1a1b26;border-radius:50%;"></div>
<svg class="b" style="left:2886.30px;top:1490.90px;" width="26" height="26" viewBox="0 0 26 26" fill="none"><circle cx="13" cy="13" r="10.9" stroke="#595a68" stroke-width="2.1"/></svg>
<div class="t" style="left:2921.22px;top:1491.18px;font-size:24px;font-weight:400;color:#5f6070;letter-spacing:1.789px;">3 To-Do</div>
<div class="b" style="left:3032.25px;top:1501.3px;width:2.7px;height:2.7px;background:#1a1b26;border-radius:50%;"></div>
<div class="t" style="left:3052.17px;top:1489.50px;font-size:28px;font-weight:400;color:#11121d;letter-spacing:2.161px;-webkit-text-stroke:1.0px #11121d;">40%</div>
<svg class="b" style="left:3145.20px;top:1494.00px;" width="21.4" height="21.4" viewBox="0 0 27 27" fill="none"><path d="M24.8 0.6L1.2 9.2Q-0.4 10.1 1 11.1L8 16.2L15.7 9.4L17.5 11.2L10.7 17.9L15.4 25.3Q16.6 26.9 17.5 25.2L26.4 2.5Q26.9 0.1 24.8 0.6Z" fill="#11121d"/></svg>
<div class="b" style="left:87px;top:1582.87px;width:62.7px;height:57.6px;background:#ecedf2;border-radius:15px;"></div>
<div class="t" style="left:87px;width:62.7px;text-align:center;top:1601.50px;font-size:23px;font-weight:400;-webkit-text-stroke:1px #5a5b6a;letter-spacing:0.6px;text-indent:0.6px;color:#5a5b6a;">12</div>
<div class="t" style="left:164.38px;top:1599.45px;font-size:24px;font-weight:400;color:#0f101c;letter-spacing:1.562px;-webkit-text-stroke:1.0px #0f101c;">Upload Document with Evidence</div>
<div class="b" style="left:87px;top:1654.87px;width:3098px;height:14.4px;background:#ebebf0;border-radius:8px;"></div>
<div class="b" style="left:87px;top:1654.87px;width:619.6px;height:14.4px;background:#d23a33;border-radius:8px;"></div>
<svg class="b" style="left:2675.40px;top:1597.97px;" width="28" height="28" viewBox="0 0 28 28" fill="none"><circle cx="14" cy="14" r="12" stroke="#20722a" stroke-width="2.2"/><path d="M8.5 14.2L13 18.1L20.2 10.3" stroke="#20722a" stroke-width="2.4" stroke-linecap="round" stroke-linejoin="round"/></svg>
<div class="t" style="left:2709.34px;top:1599.05px;font-size:24px;font-weight:400;color:#20722a;letter-spacing:1.242px;">1 completed</div>
<div class="b" style="left:2867.85px;top:1609.27px;width:2.7px;height:2.7px;background:#1a1b26;border-radius:50%;"></div>
<svg class="b" style="left:2888.50px;top:1598.87px;" width="26" height="26" viewBox="0 0 26 26" fill="none"><circle cx="13" cy="13" r="10.9" stroke="#595a68" stroke-width="2.1"/></svg>
<div class="t" style="left:2923.32px;top:1599.15px;font-size:24px;font-weight:400;color:#5f6070;letter-spacing:1.854px;">4 To-Do</div>
<div class="b" style="left:3034.55px;top:1609.27px;width:2.7px;height:2.7px;background:#1a1b26;border-radius:50%;"></div>
<div class="t" style="left:3052.36px;top:1597.47px;font-size:28px;font-weight:400;color:#11121d;letter-spacing:2.188px;-webkit-text-stroke:1.0px #11121d;">20%</div>
<svg class="b" style="left:3145.20px;top:1601.97px;" width="21.4" height="21.4" viewBox="0 0 27 27" fill="none"><path d="M24.8 0.6L1.2 9.2Q-0.4 10.1 1 11.1L8 16.2L15.7 9.4L17.5 11.2L10.7 17.9L15.4 25.3Q16.6 26.9 17.5 25.2L26.4 2.5Q26.9 0.1 24.8 0.6Z" fill="#11121d"/></svg>
<div class="b" style="left:87px;top:1690.84px;width:65px;height:57.6px;background:#ecedf2;border-radius:15px;"></div>
<div class="t" style="left:87px;width:65px;text-align:center;top:1709.47px;font-size:23px;font-weight:400;-webkit-text-stroke:1px #5a5b6a;letter-spacing:0.6px;text-indent:0.6px;color:#5a5b6a;">13</div>
<div class="t" style="left:165.41px;top:1707.42px;font-size:24px;font-weight:400;color:#0f101c;letter-spacing:1.095px;-webkit-text-stroke:1.0px #0f101c;">Injured Parties Email:</div>
<div class="b" style="left:87px;top:1762.84px;width:3098px;height:14.4px;background:#ebebf0;border-radius:8px;"></div>
<div class="b" style="left:87px;top:1762.84px;width:619.6px;height:14.4px;background:#d23a33;border-radius:8px;"></div>
<svg class="b" style="left:2675.40px;top:1705.94px;" width="28" height="28" viewBox="0 0 28 28" fill="none"><circle cx="14" cy="14" r="12" stroke="#20722a" stroke-width="2.2"/><path d="M8.5 14.2L13 18.1L20.2 10.3" stroke="#20722a" stroke-width="2.4" stroke-linecap="round" stroke-linejoin="round"/></svg>
<div class="t" style="left:2709.34px;top:1707.02px;font-size:24px;font-weight:400;color:#20722a;letter-spacing:1.242px;">1 completed</div>
<div class="b" style="left:2867.85px;top:1717.24px;width:2.7px;height:2.7px;background:#1a1b26;border-radius:50%;"></div>
<svg class="b" style="left:2888.50px;top:1706.84px;" width="26" height="26" viewBox="0 0 26 26" fill="none"><circle cx="13" cy="13" r="10.9" stroke="#595a68" stroke-width="2.1"/></svg>
<div class="t" style="left:2923.32px;top:1707.12px;font-size:24px;font-weight:400;color:#5f6070;letter-spacing:1.854px;">4 To-Do</div>
<div class="b" style="left:3034.55px;top:1717.24px;width:2.7px;height:2.7px;background:#1a1b26;border-radius:50%;"></div>
<div class="t" style="left:3052.36px;top:1705.44px;font-size:28px;font-weight:400;color:#11121d;letter-spacing:2.188px;-webkit-text-stroke:1.0px #11121d;">20%</div>
<svg class="b" style="left:3145.20px;top:1709.94px;" width="21.4" height="21.4" viewBox="0 0 27 27" fill="none"><path d="M24.8 0.6L1.2 9.2Q-0.4 10.1 1 11.1L8 16.2L15.7 9.4L17.5 11.2L10.7 17.9L15.4 25.3Q16.6 26.9 17.5 25.2L26.4 2.5Q26.9 0.1 24.8 0.6Z" fill="#11121d"/></svg>
<div class="b" style="left:87px;top:1798.81px;width:65px;height:57.6px;background:#ecedf2;border-radius:15px;"></div>
<div class="t" style="left:87px;width:65px;text-align:center;top:1817.44px;font-size:23px;font-weight:400;-webkit-text-stroke:1px #5a5b6a;letter-spacing:0.6px;text-indent:0.6px;color:#5a5b6a;">14</div>
<div class="t" style="left:165.41px;top:1815.39px;font-size:24px;font-weight:400;color:#0f101c;letter-spacing:1.415px;-webkit-text-stroke:1.0px #0f101c;">Injured Parties Address:</div>
<div class="b" style="left:87px;top:1870.81px;width:3098px;height:14.4px;background:#ebebf0;border-radius:8px;"></div>
<div class="b" style="left:87px;top:1870.81px;width:619.6px;height:14.4px;background:#d23a33;border-radius:8px;"></div>
<svg class="b" style="left:2675.40px;top:1813.91px;" width="28" height="28" viewBox="0 0 28 28" fill="none"><circle cx="14" cy="14" r="12" stroke="#20722a" stroke-width="2.2"/><path d="M8.5 14.2L13 18.1L20.2 10.3" stroke="#20722a" stroke-width="2.4" stroke-linecap="round" stroke-linejoin="round"/></svg>
<div class="t" style="left:2709.34px;top:1814.99px;font-size:24px;font-weight:400;color:#20722a;letter-spacing:1.242px;">1 completed</div>
<div class="b" style="left:2867.85px;top:1825.21px;width:2.7px;height:2.7px;background:#1a1b26;border-radius:50%;"></div>
<svg class="b" style="left:2888.50px;top:1814.81px;" width="26" height="26" viewBox="0 0 26 26" fill="none"><circle cx="13" cy="13" r="10.9" stroke="#595a68" stroke-width="2.1"/></svg>
<div class="t" style="left:2923.32px;top:1815.09px;font-size:24px;font-weight:400;color:#5f6070;letter-spacing:1.854px;">4 To-Do</div>
<div class="b" style="left:3034.55px;top:1825.21px;width:2.7px;height:2.7px;background:#1a1b26;border-radius:50%;"></div>
<div class="t" style="left:3052.36px;top:1813.41px;font-size:28px;font-weight:400;color:#11121d;letter-spacing:2.188px;-webkit-text-stroke:1.0px #11121d;">20%</div>
<svg class="b" style="left:3145.20px;top:1817.91px;" width="21.4" height="21.4" viewBox="0 0 27 27" fill="none"><path d="M24.8 0.6L1.2 9.2Q-0.4 10.1 1 11.1L8 16.2L15.7 9.4L17.5 11.2L10.7 17.9L15.4 25.3Q16.6 26.9 17.5 25.2L26.4 2.5Q26.9 0.1 24.8 0.6Z" fill="#11121d"/></svg>
<div class="b" style="left:87px;top:1906.78px;width:65px;height:57.6px;background:#ecedf2;border-radius:15px;"></div>
<div class="t" style="left:87px;width:65px;text-align:center;top:1925.41px;font-size:23px;font-weight:400;-webkit-text-stroke:1px #5a5b6a;letter-spacing:0.6px;text-indent:0.6px;color:#5a5b6a;">15</div>
<div class="t" style="left:165.41px;top:1923.36px;font-size:24px;font-weight:400;color:#0f101c;letter-spacing:1.329px;-webkit-text-stroke:1.0px #0f101c;">Birth Time of Injured Parites:</div>
<div class="b" style="left:87px;top:1978.78px;width:3098px;height:14.4px;background:#ebebf0;border-radius:8px;"></div>
<div class="b" style="left:87px;top:1978.78px;width:619.6px;height:14.4px;background:#d23a33;border-radius:8px;"></div>
<svg class="b" style="left:2675.40px;top:1921.88px;" width="28" height="28" viewBox="0 0 28 28" fill="none"><circle cx="14" cy="14" r="12" stroke="#20722a" stroke-width="2.2"/><path d="M8.5 14.2L13 18.1L20.2 10.3" stroke="#20722a" stroke-width="2.4" stroke-linecap="round" stroke-linejoin="round"/></svg>
<div class="t" style="left:2709.34px;top:1922.96px;font-size:24px;font-weight:400;color:#20722a;letter-spacing:1.242px;">1 completed</div>
<div class="b" style="left:2867.85px;top:1933.18px;width:2.7px;height:2.7px;background:#1a1b26;border-radius:50%;"></div>
<svg class="b" style="left:2888.50px;top:1922.78px;" width="26" height="26" viewBox="0 0 26 26" fill="none"><circle cx="13" cy="13" r="10.9" stroke="#595a68" stroke-width="2.1"/></svg>
<div class="t" style="left:2923.32px;top:1923.06px;font-size:24px;font-weight:400;color:#5f6070;letter-spacing:1.854px;">4 To-Do</div>
<div class="b" style="left:3034.55px;top:1933.18px;width:2.7px;height:2.7px;background:#1a1b26;border-radius:50%;"></div>
<div class="t" style="left:3052.36px;top:1921.38px;font-size:28px;font-weight:400;color:#11121d;letter-spacing:2.188px;-webkit-text-stroke:1.0px #11121d;">20%</div>
<svg class="b" style="left:3145.20px;top:1925.88px;" width="21.4" height="21.4" viewBox="0 0 27 27" fill="none"><path d="M24.8 0.6L1.2 9.2Q-0.4 10.1 1 11.1L8 16.2L15.7 9.4L17.5 11.2L10.7 17.9L15.4 25.3Q16.6 26.9 17.5 25.2L26.4 2.5Q26.9 0.1 24.8 0.6Z" fill="#11121d"/></svg>
</body></html>
